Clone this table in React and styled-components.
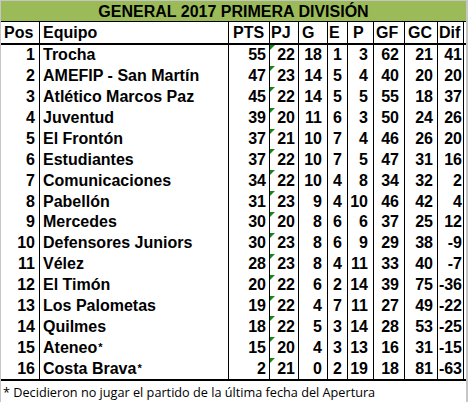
import styled, { createGlobalStyle } from "styled-components";

const GlobalStyle = createGlobalStyle`
  body {
    margin: 0;
    background: #ffffff;
  }
`;

const columns = [
  { key: "pos", label: "Pos", width: 39, head: 3, pad: 4, align: "right" },
  { key: "team", label: "Equipo", width: 189, head: 3, pad: 3, align: "left" },
  { key: "pts", label: "PTS", width: 41, head: 4, pad: 3, align: "right" },
  { key: "pj", label: "PJ", width: 29, head: 1, pad: 3, align: "right" },
  { key: "g", label: "G", width: 29, head: 3, pad: 5, align: "right" },
  { key: "e", label: "E", width: 20, head: 1, pad: 5, align: "right" },
  { key: "p", label: "P", width: 26, head: 5, pad: 5, align: "right" },
  { key: "gf", label: "GF", width: 31, head: 2, pad: 5, align: "right" },
  { key: "gc", label: "GC", width: 33, head: 3, pad: 4, align: "right" },
  { key: "dif", label: "Dif", width: 26, head: 1, pad: 1, align: "right" },
];

const teams = [
  [1, "Trocha", 55, 22, 18, 1, 3, 62, 21, 41],
  [2, "AMEFIP - San Martín", 47, 23, 14, 5, 4, 40, 20, 20],
  [3, "Atlético Marcos Paz", 45, 22, 14, 5, 5, 55, 18, 37],
  [4, "Juventud", 39, 20, 11, 6, 3, 50, 24, 26],
  [5, "El Frontón", 37, 21, 10, 7, 4, 46, 26, 20],
  [6, "Estudiantes", 37, 22, 10, 7, 5, 47, 31, 16],
  [7, "Comunicaciones", 34, 22, 10, 4, 8, 34, 32, 2],
  [8, "Pabellón", 31, 23, 9, 4, 10, 46, 42, 4],
  [9, "Mercedes", 30, 20, 8, 6, 6, 37, 25, 12],
  [10, "Defensores Juniors", 30, 23, 8, 6, 9, 29, 38, -9],
  [11, "Vélez", 28, 23, 8, 4, 11, 33, 40, -7],
  [12, "El Timón", 20, 22, 6, 2, 14, 39, 75, -36],
  [13, "Los Palometas", 19, 22, 4, 7, 11, 27, 49, -22],
  [14, "Quilmes", 18, 22, 5, 3, 14, 28, 53, -25],
  [15, "Ateneo*", 15, 20, 4, 3, 13, 16, 31, -15],
  [16, "Costa Brava*", 2, 21, 0, 2, 19, 18, 81, -63],
];

const gridCols = columns.map((c) => `${c.width}px`).join(" ");

const Frame = styled.div`
  width: 468px;
  height: 402px;
  box-sizing: border-box;
  border-top: 1px solid #c6c6c6;
  border-left: 1px solid #c6c6c6;
  border-right: 2px solid #c6c6c6;
  display: flex;
  flex-direction: column;
  font-family: "Liberation Sans", Arial, sans-serif;
  color: #000;
`;

const Title = styled.div`
  background: #9bbb59;
  border-bottom: 1px solid #000;
  font-size: 16px;
  font-weight: 700;
  line-height: 20px;
  padding-top: 1px;
  height: 19px;
  text-align: center;
`;

const HeaderRow = styled.div`
  display: grid;
  grid-template-columns: ${gridCols};
  height: 21px;
  border-bottom: 2px solid #000;
`;

const Body = styled.div`
  display: grid;
  grid-template-rows: repeat(16, 1fr);
  height: 334px;
  border-bottom: 2px solid #000;
`;

const Row = styled.div`
  display: grid;
  grid-template-columns: ${gridCols};
`;

const Cell = styled.div`
  position: relative;
  box-sizing: border-box;
  border-right: 1px solid #000;
  display: flex;
  align-items: center;
  justify-content: ${(p) => (p.$align === "left" ? "flex-start" : "flex-end")};
  padding: ${(p) => (p.$align === "left" ? `0 0 0 ${p.$pad}px` : `0 ${p.$pad}px 0 0`)};
  font-size: 16px;
  font-weight: 700;
  white-space: nowrap;
  overflow: hidden;
`;

const HeadCell = styled(Cell)`
  justify-content: flex-start;
  padding: 0 0 0 ${(p) => p.$pad}px;
`;

const Mark = styled.span`
  position: absolute;
  top: 0;
  left: 0;
  width: 0;
  height: 0;
  border-top: 5px solid #15871a;
  border-right: 5px solid transparent;
`;

const Star = styled.sup`
  font-size: 11px;
  font-weight: 700;
  line-height: 0;
  position: relative;
  top: -1px;
  margin-left: 1px;
`;

const Footer = styled.div`
  flex: 1;
  display: flex;
  align-items: center;
  padding-left: 2px;
  font-family: "Open Sans", "Noto Sans", sans-serif;
  font-size: 12.7px;
`;

const TeamName = ({ name }) =>
  name.endsWith("*") ? (
    <>
      {name.slice(0, -1)}
      <Star>*</Star>
    </>
  ) : (
    name
  );

export default function App() {
  return (
    <>
      <GlobalStyle />
      <Frame>
        <Title>GENERAL 2017 PRIMERA DIVISIÓN</Title>
        <HeaderRow>
          {columns.map((c) => (
            <HeadCell key={c.key} $pad={c.head}>
              {c.label}
            </HeadCell>
          ))}
        </HeaderRow>
        <Body>
          {teams.map((t) => (
            <Row key={t[0]}>
              {columns.map((c, i) => (
                <Cell key={c.key} $align={c.align} $pad={c.pad}>
                  {c.key === "pj" && <Mark />}
                  {c.key === "team" ? <TeamName name={t[i]} /> : t[i]}
                </Cell>
              ))}
            </Row>
          ))}
        </Body>
        <Footer>* Decidieron no jugar el partido de la última fecha del Apertura</Footer>
      </Frame>
    </>
  );
}
